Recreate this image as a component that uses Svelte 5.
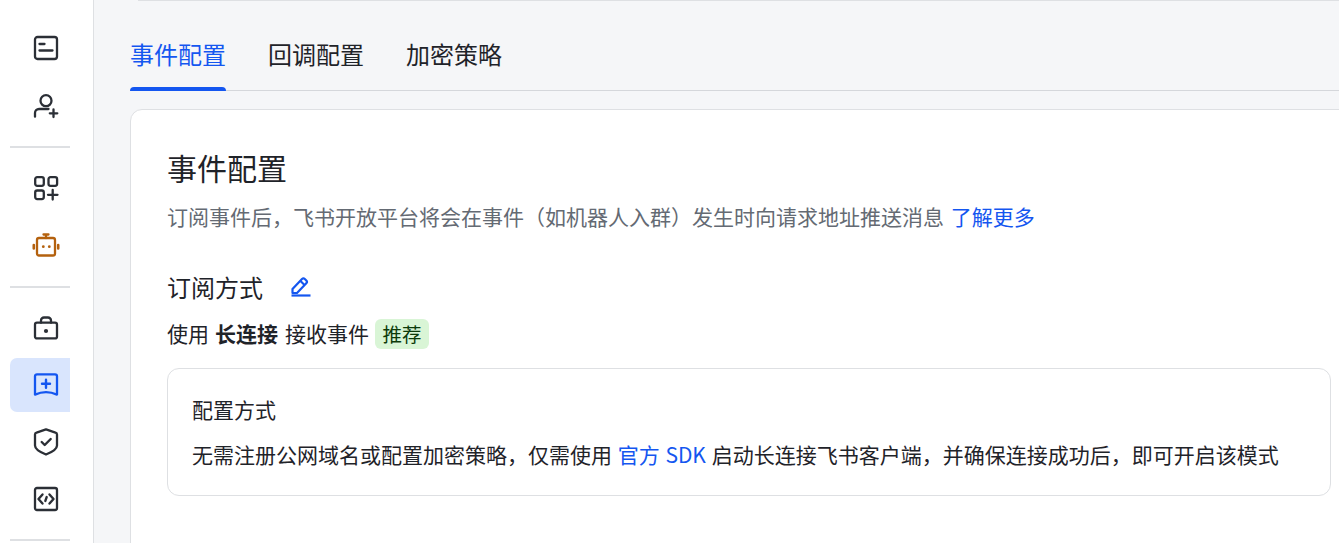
<script>
  const tabs = ['事件配置', '回调配置', '加密策略'];
  let active = 0;
</script>

<div class="page">
  <aside class="sidebar">
    <div class="group loose">
      <div class="item">
        <svg viewBox="0 0 24 24"><rect x="1" y="1" width="22" height="22" rx="2.500" /><path d="M5.500 8h5M5.500 14.500h13" /></svg>
      </div>
      <div class="item">
        <svg viewBox="0 0 24 24"><circle cx="12" cy="6.700" r="5.500" /><path d="M1 22.700v-3.700a4 4 0 0 1 4-4h9.500" /><path d="M15.800 19.300h7.500M19.500 15.500v7.500" /></svg>
      </div>
    </div>
    <hr />
    <div class="group loose">
      <div class="item">
        <svg viewBox="0 0 24 24"><rect x="1.200" y="1.200" width="8.600" height="8.600" rx="2" /><rect x="14.500" y="1.200" width="8.600" height="8.600" rx="2" /><rect x="1.200" y="14.500" width="8.600" height="8.600" rx="2" /><path d="M14 18.800h9.500M18.700 14v9.500" /></svg>
      </div>
      <div class="item robot">
        <svg viewBox="0 0 24 24"><rect x="3" y="4" width="18" height="17.500" rx="2" /><path d="M9.500 .500h5M12 .500V4" /><path d="M-.200 11v3.500M24.200 11v3.500" stroke-width="2.600" /><circle class="fill" cx="9.300" cy="12.700" r="1.400" /><circle class="fill" cx="15.300" cy="12.700" r="1.400" /></svg>
      </div>
    </div>
    <hr />
    <div class="group last">
      <div class="item">
        <svg viewBox="0 0 24 24"><rect x="1" y="6.700" width="22" height="15.700" rx="2" /><path d="M7 6.700V4.500a3 3 0 0 1 3-3h4a3 3 0 0 1 3 3v2.200" /><circle class="fill" cx="12" cy="15" r="2.100" /></svg>
      </div>
      <div class="item active">
        <svg viewBox="0 0 24 24"><path d="M3 1.300h18a2 2 0 0 1 2 2v18.300Q12 16.600 1 21.600V3.300a2 2 0 0 1 2-2z" /><path d="M8 10.700h8M12 6.700v8" stroke-width="2.400" /></svg>
      </div>
      <div class="item">
        <svg viewBox="0 0 24 24"><path d="M12-.700l9.500 3.300a2 2 0 0 1 1.500 1.900V15.500c0 3.500-6 7-11 9c-5-2-11-5.500-11-9V4.500a2 2 0 0 1 1.500-1.900z" /><path d="M7.700 12l3 3l6-6" stroke-width="2.400" /></svg>
      </div>
      <div class="item">
        <svg viewBox="0 0 24 24"><rect x="1" y="1" width="22" height="22" rx="2" /><path d="M8.500 7.500L4.500 12l4 4.500M15.500 7.500l4 4.500l-4 4.500" stroke-width="2.400" /><path d="M12.700 10l-1.400 4" /></svg>
      </div>
    </div>
    <hr />
  </aside>

  <main class="main">
    <div class="topline"></div>
    <nav class="tabs">
      {#each tabs as tab, i}
        <button class="tab" class:on={i === active} onclick={() => (active = i)}>{tab}</button>
      {/each}
    </nav>

    <section class="card">
      <h1>事件配置</h1>
      <p class="desc">订阅事件后，飞书开放平台将会在事件（如机器人入群）发生时向请求地址推送消息 <a href="#more">了解更多</a></p>

      <div class="sub-head">
        <h2>订阅方式</h2>
        <svg class="pen" viewBox="0 0 22 22"><path d="M2.500 13L12 3a2 2 0 0 1 2.800 0l1.500 1.500a2 2 0 0 1 0 2.800L7 17H2.500z" /><path d="M10.500 5l4 4" /><path d="M1.500 19.500h19" /></svg>
      </div>

      <div class="mode">
        <span>使用</span><b>长连接</b><span>接收事件</span><span class="tag">推荐</span>
      </div>

      <div class="box">
        <div class="box-title">配置方式</div>
        <div class="box-text">无需注册公网域名或配置加密策略，仅需使用 <a href="#sdk">官方 SDK</a> 启动长连接飞书客户端，并确保连接成功后，即可开启该模式</div>
      </div>
    </section>
  </main>
</div>

<style>
  :global(body) {
    margin: 0;
    font-family: "Noto Sans CJK SC", "Liberation Sans", sans-serif;
    background: #f5f6f8;
    overflow: hidden;
  }
  .page {
    display: flex;
    height: 543px;
    overflow: hidden;
  }
  .sidebar {
    flex: none;
    box-sizing: border-box;
    background: #fff;
    border-right: 1px solid #dee0e3;
    width: 94px;
    padding: 20.500px 23px 0 10px;
    display: flex;
    flex-direction: column;
  }
  .sidebar hr {
    width: 60px;
    height: 2px;
    margin: 12.500px 0;
    border: 0;
    background: #dee0e3;
    flex: none;
  }
  .group {
    display: flex;
    flex-direction: column;
    gap: 3px;
    flex: none;
  }
  .group.last {
    padding-top: 0.500px;
  }
  .item {
    height: 54px;
    flex: none;
    display: flex;
    align-items: center;
    padding-left: 24px;
    border-radius: 7px 0 0 7px;
  }
  .loose .item {
    height: 55px;
  }
  .item svg {
    width: 24px;
    height: 24px;
    overflow: visible;
    fill: none;
    stroke: #2b2f36;
    stroke-width: 2.300;
    stroke-linecap: round;
    stroke-linejoin: round;
  }
  .item .fill {
    fill: #2b2f36;
    stroke: none;
  }
  .robot svg {
    stroke: #b4610e;
  }
  .robot .fill {
    fill: #b4610e;
  }
  .item.active {
    background: #d9e5fd;
  }
  .item.active svg {
    stroke: #1456f0;
  }
  .main {
    flex: 1;
    min-width: 0;
    position: relative;
    padding-left: 36px;
  }
  .topline {
    position: absolute;
    top: 0;
    left: 44px;
    right: 0;
    height: 1px;
    background: #dee0e3;
  }
  .tabs {
    display: flex;
    gap: 42px;
    height: 90px;
    border-bottom: 1px solid #d5d7db;
  }
  .tab {
    background: none;
    border: 0;
    margin: 0;
    height: 91px;
    padding: 38px 0 0;
    box-sizing: border-box;
    font: inherit;
    font-size: 24px;
    line-height: 32px;
    color: #1f2329;
    cursor: pointer;
    display: flex;
    align-items: flex-start;
    align-self: flex-start;
  }
  .tab.on {
    color: #1456f0;
    position: relative;
  }
  .tab.on::after {
    content: "";
    position: absolute;
    left: 0;
    right: 0;
    bottom: 0;
    height: 4px;
    background: #1456f0;
    border-radius: 4px 4px 0 0;
  }
  .card {
    margin-top: 18px;
    width: 1300px;
    height: 500px;
    box-sizing: border-box;
    padding: 34px 36px 0;
    background: #fff;
    border: 1px solid #dee0e3;
    border-radius: 12px;
  }
  h1 {
    margin: 0;
    font-size: 30px;
    line-height: 46px;
    font-weight: 400;
    color: #1f2329;
  }
  .desc {
    margin: 10px 0 0;
    font-size: 21px;
    line-height: 32px;
    color: #646a73;
    word-spacing: 2px;
  }
  a {
    color: #1456f0;
    text-decoration: none;
  }
  .sub-head {
    display: flex;
    align-items: center;
    gap: 27px;
    margin-top: 37px;
    height: 36px;
  }
  h2 {
    margin: 0;
    font-size: 24px;
    line-height: 36px;
    font-weight: 400;
    color: #1f2329;
  }
  .pen {
    width: 22px;
    height: 22px;
    fill: none;
    stroke: #1456f0;
    stroke-width: 2.200;
    stroke-linejoin: round;
  }
  .mode {
    display: flex;
    align-items: center;
    gap: 6px;
    margin-top: 12px;
    height: 32px;
    font-size: 21px;
    color: #1f2329;
  }
  .mode b {
    font-weight: 700;
    margin-right: 1px;
  }
  .tag {
    margin-top: 2px;
    padding: 0 7.500px;
    height: 30px;
    line-height: 30px;
    border-radius: 6px;
    background: #d9f5d6;
    color: #0c3a0a;
    font-size: 19.500px;
  }
  .box {
    margin-top: 19px;
    width: 1164px;
    height: 128px;
    box-sizing: border-box;
    padding: 24px 24px 0;
    border: 1px solid #dee0e3;
    border-radius: 12px;
  }
  .box-title {
    font-size: 21px;
    line-height: 32px;
    color: #1f2329;
  }
  .box-text {
    margin-top: 13px;
    font-size: 21px;
    line-height: 32px;
    color: #1f2329;
    white-space: nowrap;
    word-spacing: 1px;
  }
</style>
